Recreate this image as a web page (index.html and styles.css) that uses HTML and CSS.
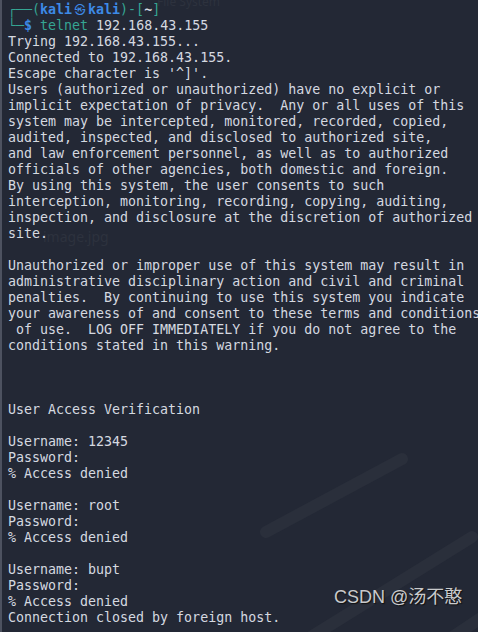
FILE: index.html
```html
<!DOCTYPE html>
<html>
<head>
<meta charset="utf-8">
<link rel="stylesheet" href="styles.css">
</head>
<body>
<div class="term">
  <svg class="wall" width="478" height="632" viewBox="0 0 478 632">
    <g stroke="#2a2f3b" stroke-width="12" stroke-linecap="round" fill="none">
      <line x1="266" y1="532" x2="402" y2="459"/>
      <line x1="306" y1="640" x2="472" y2="537"/>
      <line x1="448" y1="640" x2="490" y2="612"/>
    </g>
  </svg>
  <span class="ghost ghost-fs">File System</span>
  <span class="ghost ghost-img">image.jpg</span>
<pre class="out"><span class="g">┌──(</span><span class="b">kali<span class="at">㉿</span>kali</span><span class="g">)-[</span><span class="w">~</span><span class="g">]</span>
<span class="g">└─</span><span class="b">$</span> <span class="g">telnet</span> 192.168.43.155
Trying 192.168.43.155...
Connected to 192.168.43.155.
Escape character is '^]'.
Users (authorized or unauthorized) have no explicit or
implicit expectation of privacy.  Any or all uses of this
system may be intercepted, monitored, recorded, copied,
audited, inspected, and disclosed to authorized site,
and law enforcement personnel, as well as to authorized
officials of other agencies, both domestic and foreign.
By using this system, the user consents to such
interception, monitoring, recording, copying, auditing,
inspection, and disclosure at the discretion of authorized
site.

Unauthorized or improper use of this system may result in
administrative disciplinary action and civil and criminal
penalties.  By continuing to use this system you indicate
your awareness of and consent to these terms and conditions
 of use.  LOG OFF IMMEDIATELY if you do not agree to the
conditions stated in this warning.



User Access Verification

Username: 12345
Password:
% Access denied

Username: root
Password:
% Access denied

Username: bupt
Password:
% Access denied
Connection closed by foreign host.</pre>
  <span class="mark">CSDN @汤不憨</span>
</div>
</body>
</html>
```
FILE: styles.css
```css
html, body {
  margin: 0;
  padding: 0;
  background: #232835;
}
.term {
  position: relative;
  width: 476px;
  height: 632px;
  overflow: hidden;
  background: #232835;
  border-left: 2px solid #4d5260;
}
.wall {
  position: absolute;
  left: -2px;
  top: 0;
}
.ghost {
  position: absolute;
  font-family: "Noto Sans", "DejaVu Sans", sans-serif;
  color: #2d323e;
  white-space: nowrap;
}
.ghost-fs { left: 155px; top: -7px; font-size: 12px; }
.ghost-img { left: 41px; top: 227px; font-size: 14px; }
.out {
  position: relative;
  margin: 0;
  padding: 1px 0 0 6px;
  font-family: "DejaVu Sans Mono", "Liberation Mono", monospace;
  font-size: 13.3px;
  line-height: 16px;
  color: #d5d9e0;
  white-space: pre;
}
.g { color: #35a593; }
.b { color: #3d8ae6; font-weight: bold; }
.w { color: #d5d9e0; font-weight: bold; }
.at {
  display: inline-block;
  width: 16px;
  text-align: center;
  font-family: "Noto Sans CJK JP", "DejaVu Sans", sans-serif;
  font-size: 11px;
  font-weight: normal;
}
.mark {
  position: absolute;
  left: 332px;
  top: 582px;
  font-family: "Liberation Sans", "Noto Sans CJK SC", sans-serif;
  font-size: 18px;
  color: #c9cacc;
  text-shadow: 1px 1px 1px #111;
  white-space: nowrap;
}
```
